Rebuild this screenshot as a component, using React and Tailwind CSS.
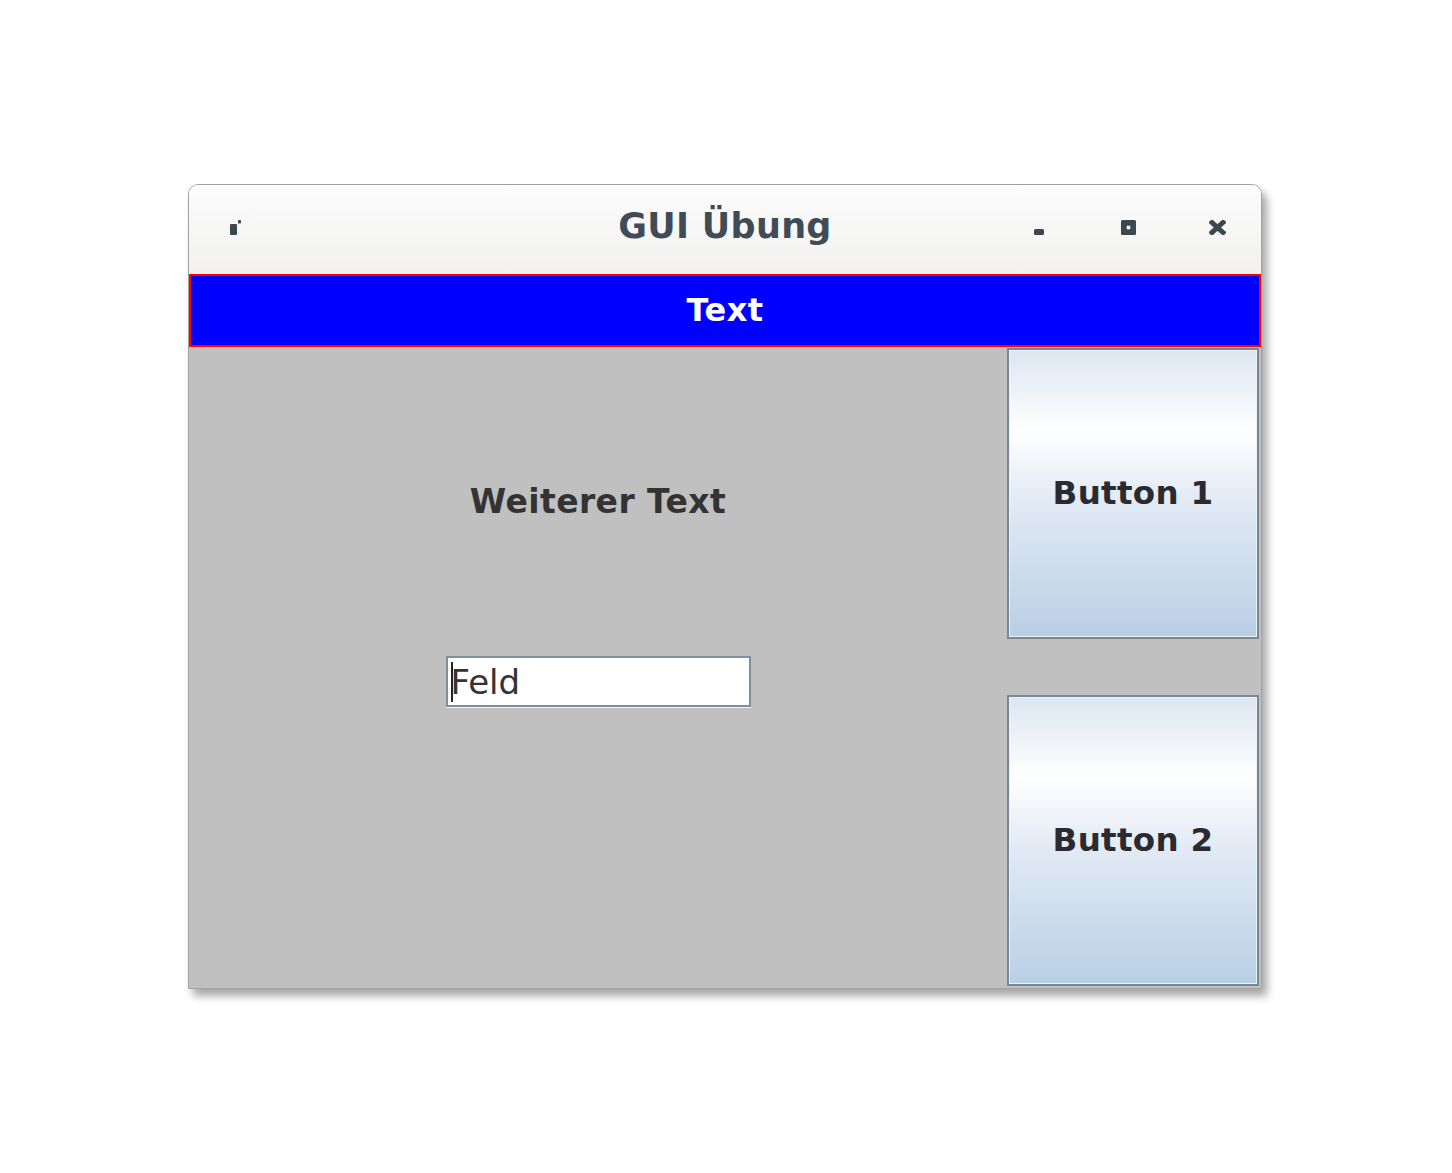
import React from "react";

const font = { fontFamily: '"DejaVu Sans", "Liberation Sans", sans-serif' };

function SwingButton({ label }) {
  return (
    <div className="h-[291px] w-[252px] border-2 border-[#778797] bg-[#c0c0c0]">
      <div className="flex h-full w-full items-center justify-center border border-[#eef3f8] bg-[linear-gradient(to_bottom,#dce6f1_0%,#ffffff_28%,#e4ecf5_50%,#b9cfe6_100%)]">
        <span className="text-[32.5px] font-bold leading-none tracking-[0.3px] text-[#2a2a30]" style={font}>
          {label}
        </span>
      </div>
    </div>
  );
}

export default function App() {
  return (
    <div className="h-[1173px] w-full bg-white pl-[188px] pt-[184px]" style={font}>
      <div className="w-[1074px] overflow-hidden rounded-t-[10px] border border-[#a2a2a2] shadow-[5px_7px_9px_rgba(0,0,0,0.35)]">
        {/* Title bar */}
        <div className="grid h-[89px] grid-cols-[1fr_auto_1fr] items-center bg-[linear-gradient(to_bottom,#fcfcfc,#f2f1f0)]">
          <div className="flex items-center pl-[40px] pb-[4px]">
            <svg width="12" height="16" viewBox="0 0 12 16">
              <rect x="1" y="4" width="7" height="11" rx="1" fill="#3b4850" />
              <rect x="9" y="0" width="3" height="3.5" rx="1" fill="#3b4850" />
            </svg>
          </div>
          <div className="pb-[6px] text-[35px] font-bold leading-none tracking-[0.3px] text-[#3f4c57]">GUI Übung</div>
          <div className="flex items-center justify-end pr-[35px] pb-[4px]">
            <svg width="11" height="15" viewBox="0 0 11 15">
              <rect x="0" y="9" width="10" height="6" rx="1.5" fill="#3b4850" />
            </svg>
            <div className="w-[76px]" />
            <svg width="15" height="15" viewBox="0 0 15 15">
              <rect x="0" y="0" width="15" height="15" rx="1.5" fill="#3b4850" />
              <rect x="5.75" y="5.75" width="3.5" height="3.5" fill="#ffffff" />
            </svg>
            <div className="w-[73px]" />
            <svg width="17" height="15" viewBox="0 0 17 15">
              <path d="M3 2.5 L14 12.5 M14 2.5 L3 12.5" stroke="#3b4850" strokeWidth="5" strokeLinecap="square" />
            </svg>
          </div>
        </div>

        {/* Blue label */}
        <div className="flex h-[73px] items-center justify-center border-2 border-[#ff0000] bg-[#0000ff]">
          <span className="pb-[2px] text-[32px] font-bold leading-none tracking-[0.5px] text-white">Text</span>
        </div>

        {/* Content */}
        <div className="flex h-[641px] bg-[#c0c0c0]">
          <div className="flex flex-1 flex-col items-center pt-[134px]">
            <div className="flex h-[40px] items-center text-[33px] font-bold leading-none tracking-[0.4px] text-[#333333]">
              Weiterer Text
            </div>
            <div className="mt-[135px] h-[51px] w-[305px] border-2 border-[#7f8e9c] bg-white shadow-[0_1px_0_#f4f4f4]">
              <div className="flex h-full items-center pl-[3px]">
                <div className="mr-[-2px] h-[40px] w-[2px] bg-[#222]" />
                <span className="text-[34px] leading-none text-[#333333]">Feld</span>
              </div>
            </div>
          </div>
          <div className="flex w-[254px] flex-col gap-[56px] pt-[1px]">
            <SwingButton label="Button 1" />
            <SwingButton label="Button 2" />
          </div>
        </div>
      </div>
    </div>
  );
}
